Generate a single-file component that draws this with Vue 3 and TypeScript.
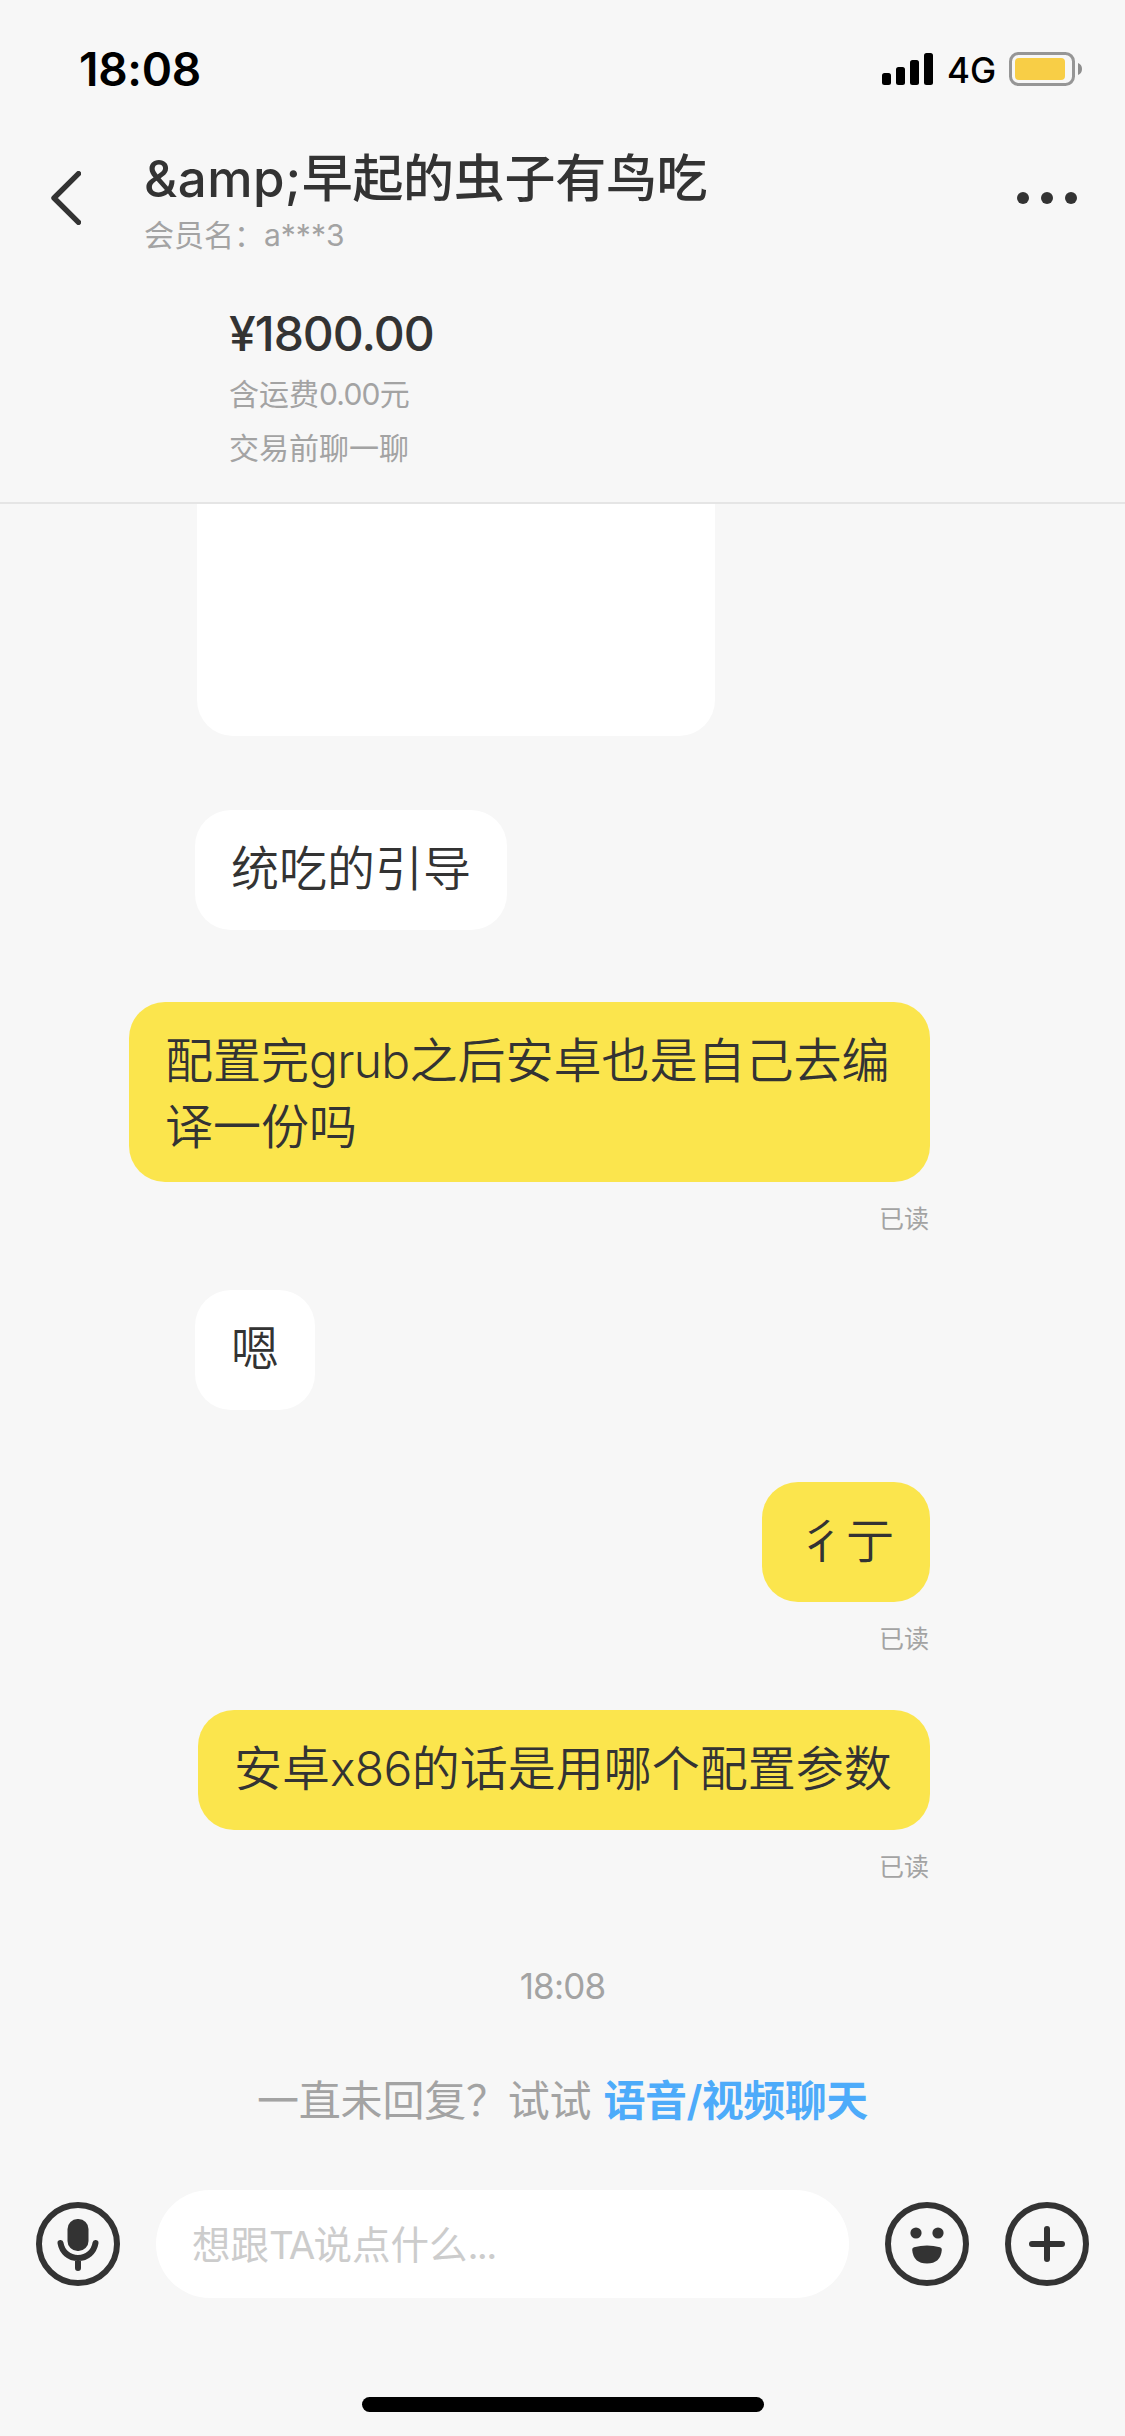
<script setup lang="ts">
interface Message {
  id: number
  side: 'left' | 'right'
  lines: string[]
  read: boolean
  width?: number
}

interface Run {
  text: string
  latin: boolean
}

// Splits mixed text so Latin runs can be tracked separately from Chinese ones.
function runs(text: string): Run[] {
  const parts = text.match(/[\x21-\x7e]+|[^\x21-\x7e]+/g) ?? []
  return parts.map((p) => ({ text: p, latin: /^[\x21-\x7e]/.test(p) }))
}

const title = '&amp;早起的虫子有鸟吃'

const messages: Message[] = [
  { id: 1, side: 'left', lines: ['统吃的引导'], read: false },
  { id: 2, side: 'right', lines: ['配置完grub之后安卓也是自己去编', '译一份吗'], read: true, width: 801 },
  { id: 3, side: 'left', lines: ['嗯'], read: false },
  { id: 4, side: 'right', lines: ['彳亍'], read: true },
  { id: 5, side: 'right', lines: ['安卓x86的话是用哪个配置参数'], read: true, width: 732 },
]
</script>

<template>
  <div class="screen">
    <div class="status">
      <span class="clock">18:08</span>
      <div class="status-right">
        <svg class="signal" width="51" height="32" viewBox="0 0 51 32">
          <rect x="0" y="20" width="9" height="12" rx="2.5" />
          <rect x="14" y="14" width="9" height="18" rx="2.5" />
          <rect x="28" y="7" width="9" height="25" rx="2.5" />
          <rect x="42" y="0" width="9" height="32" rx="2.5" />
        </svg>
        <span class="network">4G</span>
        <svg class="battery" width="73" height="34" viewBox="0 0 73 34">
          <rect x="1.5" y="1.5" width="63" height="31" rx="8" fill="none" stroke="#969696" stroke-width="3" />
          <rect x="6" y="6" width="50" height="22" rx="4" fill="#f8ce46" />
          <path d="M69 11 Q73 12.5 73 17 Q73 21.5 69 23Z" fill="#8e8e8e" />
        </svg>
      </div>
    </div>

    <header class="nav">
      <svg class="back" width="30" height="54" viewBox="0 0 30 54">
        <path d="M27.5 2.7 L3 27 L27.5 51.3" fill="none" stroke="#333" stroke-width="5.4" stroke-linecap="round" stroke-linejoin="round" />
      </svg>
      <div class="who">
        <div class="name"><span v-for="(r, i) in runs(title)" :key="i" :class="{ latin: r.latin }">{{ r.text }}</span></div>
        <div class="member">会员名：a***3</div>
      </div>
      <svg class="more" width="60" height="12" viewBox="0 0 60 12">
        <circle cx="6" cy="6" r="6" /><circle cx="30" cy="6" r="6" /><circle cx="54" cy="6" r="6" />
      </svg>
    </header>

    <section class="goods">
      <div class="price">¥1800.00</div>
      <div class="note"><span v-for="(r, i) in runs('含运费0.00元')" :key="i" :class="{ latin: r.latin }">{{ r.text }}</span></div>
      <div class="note">交易前聊一聊</div>
    </section>

    <main class="chat">
      <div class="picture"></div>
      <div v-for="m in messages" :key="m.id" class="msg" :class="m.side">
        <div class="bubble" :style="m.width ? { width: m.width + 'px' } : undefined">
          <div v-for="line in m.lines" :key="line" class="line"><span v-for="(r, i) in runs(line)" :key="i" :class="{ latin: r.latin }">{{ r.text }}</span></div>
        </div>
        <div v-if="m.read" class="read">已读</div>
      </div>
      <div class="time">18:08</div>
      <div class="tip"><span>一直未回复？试试</span><a class="link">语音/视频聊天</a></div>
    </main>

    <footer class="composer">
      <svg class="icon" width="84" height="84" viewBox="0 0 84 84">
        <circle cx="42" cy="42" r="39" fill="none" stroke="#333" stroke-width="6" />
        <rect x="31.5" y="17" width="21" height="32" rx="10" fill="#333" />
        <path d="M24.5 41 C26 50 33 56 42 56 S58 50 59.500 41 M42 56 V66" fill="none" stroke="#333" stroke-width="6" stroke-linecap="round" />
      </svg>
      <div class="field"><span v-for="(r, i) in runs('想跟TA说点什么...')" :key="i" :class="{ latin: r.latin }">{{ r.text }}</span></div>
      <svg class="icon" width="84" height="84" viewBox="0 0 84 84">
        <circle cx="42" cy="42" r="39" fill="none" stroke="#333" stroke-width="6" />
        <circle cx="31" cy="31" r="5.600" fill="#333" />
        <circle cx="53" cy="31" r="5.600" fill="#333" />
        <path d="M29 45.200 Q42 41.600 55 45.200 Q57 45.800 56.800 48 Q55.500 61.500 42 61.500 T27.200 48 Q27 45.800 29 45.200Z" fill="#333" />
      </svg>
      <svg class="icon" width="84" height="84" viewBox="0 0 84 84">
        <circle cx="42" cy="42" r="39" fill="none" stroke="#333" stroke-width="6" />
        <path d="M27 42 H57 M42 27 V57" fill="none" stroke="#333" stroke-width="6" stroke-linecap="round" />
      </svg>
    </footer>
    <div class="home"></div>
  </div>
</template>

<style>
body {
  background: #f7f7f7;
}
</style>

<style scoped>
.screen {
  width: 1125px;
  height: 2436px;
  display: flex;
  flex-direction: column;
  background: #f7f7f7;
  color: #333;
  font-family: Inter, "Noto Sans CJK SC", sans-serif;
  white-space: nowrap;
  overflow: hidden;
}
.status {
  height: 138px;
  flex: none;
  display: flex;
  align-items: center;
  justify-content: space-between;
  padding: 0 43px 0 79px;
  box-sizing: border-box;
  color: #000;
}
.clock {
  font-size: 46px;
  font-weight: 600;
  line-height: 56px;
  letter-spacing: -0.3px;
}
.status-right {
  display: flex;
  align-items: center;
}
.network {
  width: 47px;
  margin: 2px 15px 0 14px;
  font-size: 35px;
  font-weight: 500;
  line-height: 40px;
}
.nav {
  height: 132px;
  flex: none;
  display: flex;
  padding: 0 48px 0 51px;
}
.back {
  margin-top: 33px;
}
.who {
  margin-left: 63px;
  padding-top: 9px;
  flex: 1;
}
.name {
  font-size: 51px;
  line-height: 64px;
  font-weight: 500;
  letter-spacing: -0.3px;
}
.name .latin {
  letter-spacing: 0.5px;
}
.member {
  margin-top: 4px;
  font-size: 30px;
  line-height: 40px;
  color: #a3a3a3;
}
.more {
  margin-top: 54px;
  fill: #333;
}
.goods {
  flex: none;
  height: 232px;
  margin-top: 2px;
  padding: 32px 0 0 229px;
  box-sizing: border-box;
  border-bottom: 2px solid #e5e5e5;
}
.price {
  font-size: 48px;
  line-height: 60px;
  font-weight: 500;
  letter-spacing: -1px;
}
.note {
  font-size: 30px;
  line-height: 54px;
  color: #a3a3a3;
}
.note .latin {
  letter-spacing: -0.8px;
}
.price + .note {
  margin-top: 3px;
}
.chat {
  height: 1686px;
  flex: none;
  display: flex;
  flex-direction: column;
  padding: 0 195px;
}
.picture {
  width: 518px;
  height: 232px;
  margin-left: 2px;
  background: #fff;
  border-radius: 0 0 36px 36px;
}
.msg {
  display: flex;
  flex-direction: column;
  margin-top: 72px;
  align-items: flex-start;
}
.picture + .msg {
  margin-top: 74px;
}
.msg.right {
  align-items: flex-end;
}
.bubble {
  min-height: 120px;
  padding: 26px 36px 22px;
  box-sizing: border-box;
  border-radius: 36px;
  background: #fff;
}
.right .bubble {
  background: #fbe54d;
}
.line {
  font-size: 48px;
  line-height: 66px;
  font-weight: 350;
}
.line .latin {
  letter-spacing: -0.7px;
}
.read {
  height: 36px;
  margin-top: 19px;
  margin-bottom: -19px;
  margin-right: 1px;
  font-size: 25px;
  line-height: 36px;
  color: #a3a3a3;
}
.time {
  margin-top: 98px;
  text-align: center;
  font-size: 35px;
  line-height: 44px;
  letter-spacing: -0.8px;
  color: #a3a3a3;
}
.tip {
  display: flex;
  margin-top: 63px;
  margin-left: 62px;
  font-size: 42px;
  line-height: 60px;
  letter-spacing: -0.2px;
  color: #a3a3a3;
}
.link {
  margin-left: 12px;
  font-weight: 600;
  letter-spacing: -0.5px;
  color: #4dabfa;
}
.composer {
  flex: none;
  height: 108px;
  display: flex;
  align-items: center;
  gap: 36px;
  padding: 0 36px;
}
.field {
  flex: 1;
  height: 108px;
  padding-left: 36px;
  box-sizing: border-box;
  border-radius: 54px;
  background: #fff;
  color: #ccc;
  font-size: 38.500px;
  line-height: 111px;
}
.field .latin {
  letter-spacing: -1.8px;
}
.home {
  flex: none;
  width: 402px;
  height: 15px;
  margin: 99px auto 0;
  border-radius: 8px;
  background: #000;
}
</style>
